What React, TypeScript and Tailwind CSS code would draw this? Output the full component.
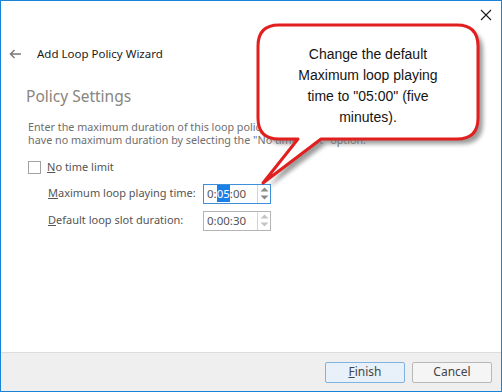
import React from 'react';

const ui = { fontFamily: '"Noto Sans", "Open Sans", sans-serif' };

function Spinner({ active }: { active: boolean }) {
  const c = active ? '#8a8a8a' : '#c4c4c4';
  return (
    <div className="flex h-full w-[13px] flex-col items-center justify-center gap-[3px] border-l border-[#d4d4d4]">
      <svg width="9" height="5" viewBox="0 0 9 5">
        <path d="M0.5 4.5 L4.5 0.5 L8.5 4.5 Z" fill={c} />
      </svg>
      <svg width="9" height="5" viewBox="0 0 9 5">
        <path d="M0.5 0.5 L4.5 4.5 L8.5 0.5 Z" fill={c} />
      </svg>
    </div>
  );
}

function Callout() {
  // bubble with tail pointing at the first time field
  const bubble =
    'M278 24 H456 Q477 24 477 45 V117 Q477 138 456 138 H320 L262 182 L297 138 H278 Q257 138 257 117 V45 Q257 24 278 24 Z';
  return (
    <div className="pointer-events-none absolute inset-0">
      <svg width="502" height="392" className="absolute left-0 top-0">
        <defs>
          <filter id="blur" x="-10%" y="-10%" width="130%" height="130%">
            <feGaussianBlur stdDeviation="2" />
          </filter>
        </defs>
        <path d={bubble} transform="translate(5 5)" fill="#7a7a7a" opacity="0.75" filter="url(#blur)" />
        <path d={bubble} fill="#ffffff" stroke="#e11f1f" strokeWidth="3" strokeLinejoin="round" />
      </svg>
      <div
        className="absolute left-[257px] top-[43px] w-[220px] text-center text-[14px] leading-[21px] text-[#141414]"
        style={{ fontFamily: '"Liberation Sans", Arial, sans-serif' }}
      >
        Change the default
        <br />
        Maximum loop playing
        <br />
        time to "05:00" (five
        <br />
        minutes).
      </div>
    </div>
  );
}

export default function App() {
  return (
    <div
      className="relative flex h-[392px] w-[502px] flex-col overflow-hidden border border-[#1883d7] bg-white text-[12px] text-[#1e1e1e]"
      style={ui}
    >
      {/* Top bar */}
      <div className="flex h-[28px] justify-end pr-[9px] pt-[8px]">
        <svg width="12" height="12" viewBox="0 0 12 12">
          <path d="M1 1 L11 11 M11 1 L1 11" stroke="#1a1a1a" strokeWidth="1.1" />
        </svg>
      </div>

      {/* Title row */}
      <div className="flex h-[50px] items-center pl-[8px]">
        <svg width="13" height="10" viewBox="0 0 13 10" className="mr-[15px]">
          <path d="M12 5 H1.5 M5.5 1 L1.5 5 L5.5 9" stroke="#7a7a7a" strokeWidth="1.5" fill="none" />
        </svg>
        <span className="text-[11.5px] text-[#1a1a1a]">Add Loop Policy Wizard</span>
      </div>

      {/* Content */}
      <div className="flex flex-col px-[25px]">
        <h2 className="mt-[6px] text-[15.5px] leading-[22px] text-[#8a8580]">Policy Settings</h2>
        <p className="mt-[14px] whitespace-nowrap pl-[2px] text-[10.75px] leading-[13px] text-[#6e6e6e]">
          Enter the maximum duration of this loop policy, or specify that the policy should
          <br />
          have no maximum duration by selecting the "No time limit" option.
        </p>

        <div className="mt-[12px] flex items-center pl-[2px]">
          <div className="h-[13px] w-[13px] border border-[#a2a2a2] bg-white" />
          <span className="ml-[6px] text-[11px] text-[#555555]">
            <span className="underline">N</span>o time limit
          </span>
        </div>

        <div className="mt-[8px] flex flex-col gap-[7px] pl-[22px]">
          <div className="flex h-[20px] items-center">
            <span className="w-[155px] whitespace-nowrap text-[11px] text-[#555555]">
              <span className="underline">M</span>aximum loop playing time:
            </span>
            <div className="flex h-[20px] w-[68px] items-center border border-[#3c8fdb] bg-white">
              <div className="flex flex-1 items-center pl-[3px] text-[11.5px] text-[#555555]">
                0:<span className="bg-[#1a7fe6] text-white">05</span>:00
              </div>
              <Spinner active />
            </div>
          </div>
          <div className="flex h-[20px] items-center">
            <span className="w-[155px] whitespace-nowrap text-[11px] text-[#555555]">
              <span className="underline">D</span>efault loop slot duration:
            </span>
            <div className="flex h-[20px] w-[68px] items-center border border-[#b4b4b4] bg-white">
              <div className="flex flex-1 items-center pl-[3px] text-[11.5px] text-[#555555]">0:00:30</div>
              <Spinner active={false} />
            </div>
          </div>
        </div>
      </div>

      {/* Footer */}
      <div className="mt-auto flex h-[39px] items-center justify-end gap-[7px] border-t border-[#dcdcdc] bg-[#efefef] pr-[9px]">
        <button className="h-[21px] w-[80px] rounded-[2px] border border-[#7fb3e0] bg-[#e8f1fa] text-[12px] text-[#444444]">
          <span className="underline">F</span>inish
        </button>
        <button className="h-[21px] w-[80px] rounded-[2px] border border-[#b8b8b8] bg-[#f5f5f5] text-[12px] text-[#444444]">
          Cancel
        </button>
      </div>

      <Callout />
    </div>
  );
}
